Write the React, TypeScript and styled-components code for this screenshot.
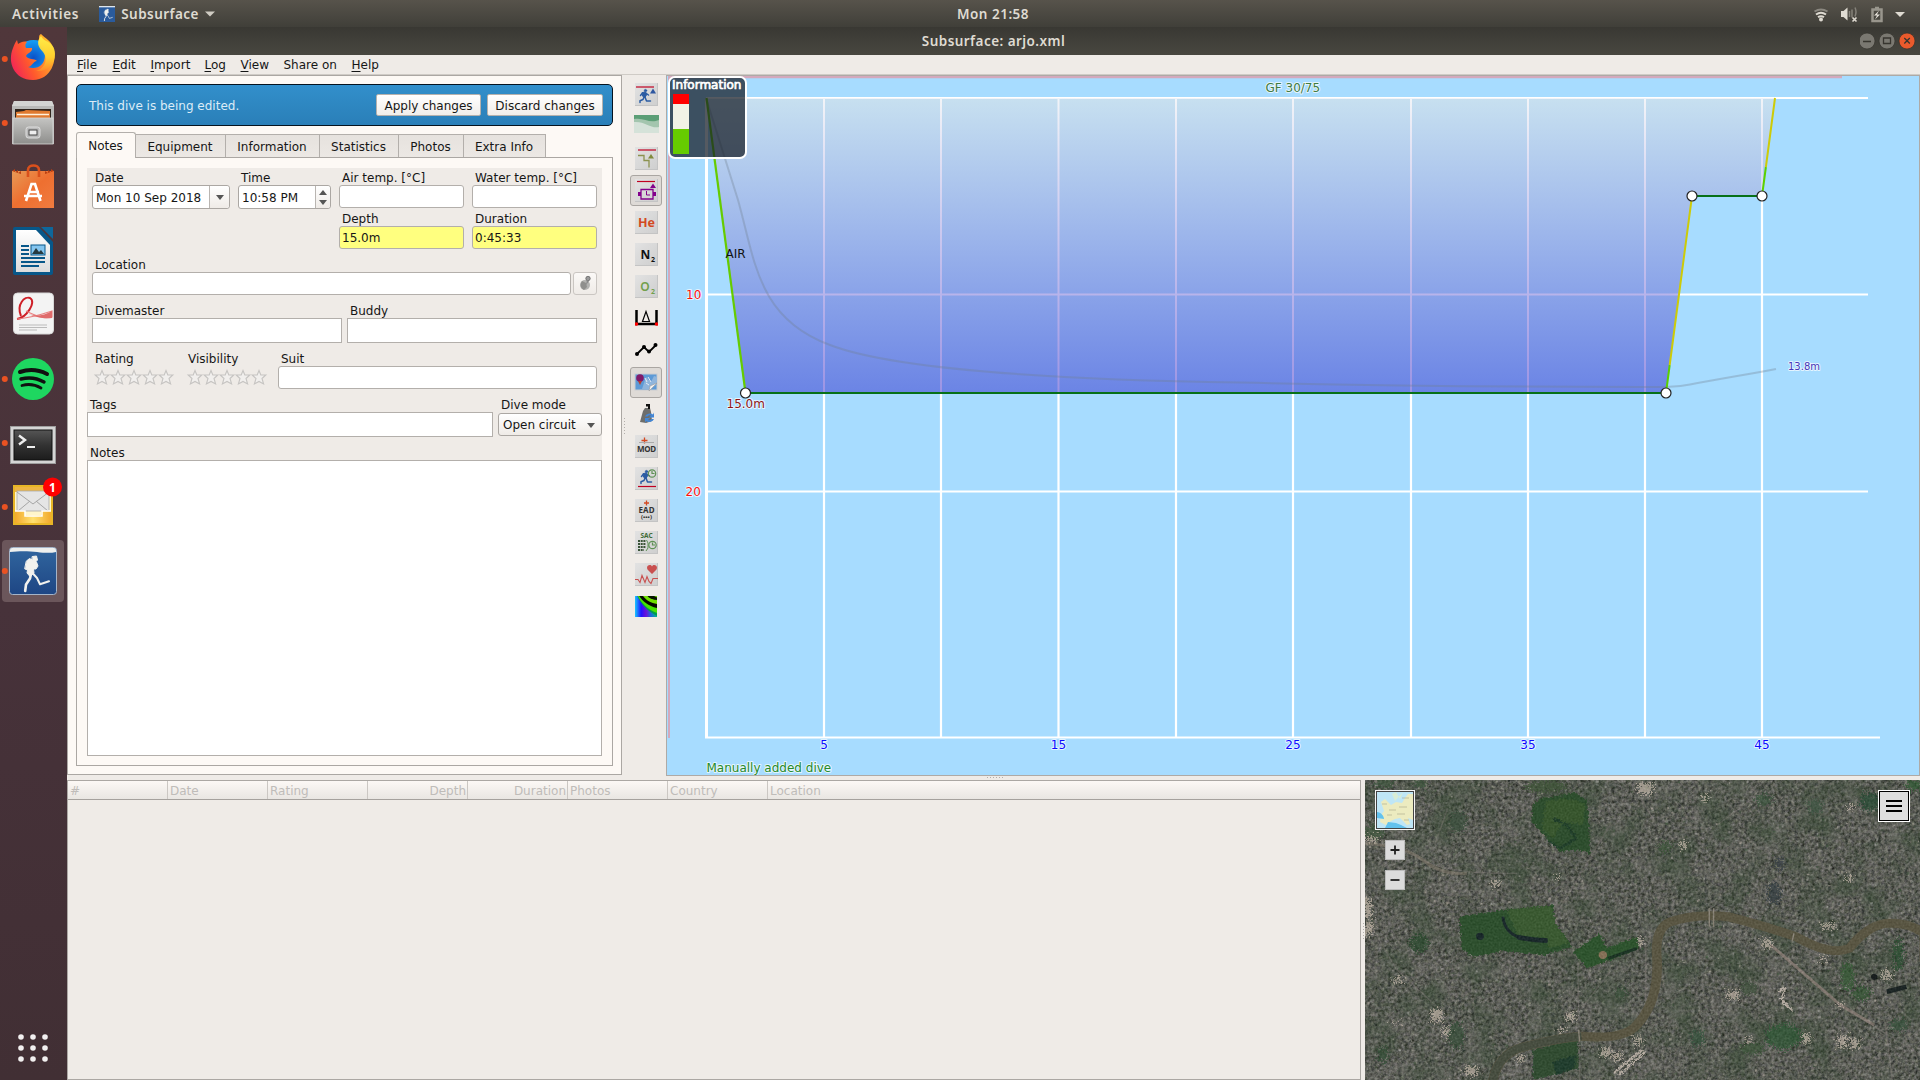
import React from "react";
import styled, { createGlobalStyle, css } from "styled-components";

const GlobalStyle = createGlobalStyle`
  * { box-sizing: border-box; }
  html, body { margin: 0; padding: 0; overflow: hidden; }
  svg { display: block; }
`;

const uiFont = `"DejaVu Sans", sans-serif`;
const shellFont = `"Noto Sans", "Open Sans", sans-serif`;

/* ---------- shell ---------- */

const Screen = styled.div`
  width: 1920px;
  height: 1080px;
  display: flex;
  flex-direction: column;
  background: #efebe7;
  font: 12px/17px ${uiFont};
  color: #161616;
`;

const TopBar = styled.header`
  height: 27px;
  flex: none;
  display: grid;
  grid-template-columns: 1fr auto 1fr;
  align-items: center;
  padding: 0 14px 0 12px;
  background: linear-gradient(#57534b, #403f39);
  color: #dfdbd2;
  font: 600 13.5px/28px ${shellFont};
`;

const TopLeft = styled.div`
  display: flex;
  align-items: center;
  letter-spacing: 0.7px;
`;

const AppMenu = styled.div`
  display: flex;
  align-items: center;
  margin-left: 20px;
  gap: 6px;
`;

const AppName = styled.span`
  letter-spacing: 0.45px;
`;

const Clock = styled.div`
  letter-spacing: 0.5px;
  padding-left: 68px;
  width: 141px;
  white-space: nowrap;
  display: flex;
  justify-content: center;
`;

const Tray = styled.div`
  display: flex;
  justify-content: flex-end;
`;

const Body = styled.div`
  flex: 1;
  min-height: 0;
  display: flex;
`;

const Dock = styled.nav`
  width: 67px;
  flex: none;
  display: flex;
  flex-direction: column;
  justify-content: space-between;
  background: linear-gradient(#50373b, #47323a 55%, #412f34);
`;

const DockItem = styled.div`
  height: 64px;
`;

const Window = styled.main`
  flex: 1;
  min-width: 0;
  display: flex;
  flex-direction: column;
`;

const TitleBar = styled.div`
  height: 28px;
  flex: none;
  display: grid;
  grid-template-columns: 60px 1fr 60px;
  align-items: center;
  background: linear-gradient(#393833, #484740);
  color: #dfdbd2;
  font: 600 13.5px/28px ${shellFont};
  letter-spacing: 0.45px;
`;

const WindowTitle = styled.div`
  text-align: center;
`;

const MenuBar = styled.div`
  height: 20px;
  flex: none;
  display: flex;
  gap: 14.5px;
  padding: 2px 0 0 10px;
  border-bottom: 1px solid #cfcbc6;
`;

const MenuEntry = styled.span<{ $w: number }>`
  width: ${(p) => p.$w}px;
  white-space: nowrap;
  u { text-underline-offset: 2px; }
`;

const UpperPane = styled.div`
  height: 701px;
  flex: none;
  display: flex;
  position: relative;
`;

const LowerPane = styled.div`
  flex: 1;
  display: flex;
  padding-top: 4px;
`;

/* ---------- dive editor ---------- */

const EditorFrame = styled.section`
  width: 555px;
  height: 700px;
  flex: none;
  border: 1px solid #aba7a3;
  background: #fdf9f5;
  padding: 8px;
`;

const MessageBar = styled.div`
  height: 42px;
  display: flex;
  align-items: center;
  gap: 6px;
  padding: 0 9px 0 12px;
  border: 1px solid #05131f;
  border-radius: 5px;
  background: linear-gradient(#328fcb, #2a7fb8);
  color: #dcecf7;
`;

const MessageText = styled.span`
  flex: 1;
  padding-top: 2px;
`;

const PushButton = styled.button<{ $w: number }>`
  width: ${(p) => p.$w}px;
  height: 22px;
  padding: 2px 0 0;
  border: 1px solid #b5b1ad;
  border-radius: 2px;
  background: linear-gradient(#ffffff, #f1eeea);
  color: #161616;
  font: 12px/18px ${uiFont};
  white-space: nowrap;
`;

const Tabs = styled.div`
  display: flex;
  align-items: flex-end;
  height: 31px;
  padding-top: 5px;
`;

const Tab = styled.div<{ $w: number; $active?: boolean }>`
  width: ${(p) => p.$w}px;
  height: 23px;
  line-height: 24px;
  text-align: center;
  border: 1px solid #b3afab;
  border-left-width: 0;
  border-bottom: 0;
  padding-right: 1px;
  background: linear-gradient(#e6e2de, #ece8e4);
  ${(p) =>
    p.$active &&
    css`
      height: 26px;
      line-height: 27px;
      margin-bottom: -1px;
      border-left-width: 1px;
      border-radius: 3px 3px 0 0;
      background: #fdf9f5;
      position: relative;
    `}
`;

const TabPane = styled.div`
  height: 609px;
  padding: 10px;
  border: 1px solid #aba7a3;
`;

const Form = styled.div`
  height: 588px;
  background: #efebe7;
`;

const Row = styled.div<{ $top?: number; $gap?: number; $indent?: number }>`
  display: flex;
  gap: ${(p) => p.$gap ?? 8}px;
  padding-top: ${(p) => p.$top ?? 0}px;
  padding-left: ${(p) => p.$indent ?? 5}px;
`;

const Field = styled.label<{ $w: number; $lh?: number }>`
  width: ${(p) => p.$w}px;
  display: flex;
  flex-direction: column;
  > span {
    height: ${(p) => p.$lh ?? 16}px;
    line-height: ${(p) => (p.$lh ? p.$lh + 4 : 18)}px;
    padding-left: 3px;
    white-space: nowrap;
  }
`;

const Box = styled.div<{ $h?: number; $yellow?: boolean; $square?: boolean }>`
  height: ${(p) => p.$h ?? 23}px;
  line-height: 22px;
  padding-left: 2px;
  border: 1px solid #b3afab;
  border-radius: ${(p) => (p.$square ? 0 : 3)}px;
  background: ${(p) => (p.$yellow ? "#ffff7f" : "#ffffff")};
`;

const DateBox = styled.div`
  height: 24px;
  display: flex;
  border: 1px solid #aba7a3;
  border-radius: 3px;
  background: #fff;
  line-height: 24px;
`;

const DateValue = styled.div`
  flex: 1;
  padding-left: 3px;
  white-space: nowrap;
`;

const DropZone = styled.div<{ $w: number }>`
  width: ${(p) => p.$w}px;
  display: flex;
  flex-direction: column;
  align-items: center;
  justify-content: center;
  gap: 5px;
  border-left: 1px solid #b9b5b1;
  border-radius: 0 3px 3px 0;
  background: linear-gradient(#fff, #efebe7);
`;

const Arrow = styled.i<{ $up?: boolean }>`
  border: 4px solid transparent;
  border-top: ${(p) => (p.$up ? 0 : "5px solid #555")};
  border-bottom: ${(p) => (p.$up ? "5px solid #555" : 0)};
`;

const SelectBox = styled.div`
  height: 23px;
  margin-top: 1px;
  display: flex;
  align-items: center;
  justify-content: space-between;
  padding: 1px 6px 0 4px;
  border: 1px solid #aba7a3;
  border-radius: 3px;
  background: linear-gradient(#fff, #efebe7);
  white-space: nowrap;
`;

const GlobeButton = styled.div`
  width: 24px;
  height: 23px;
  margin: 16px 0 0 -6px;
  border: 1px solid #cac6c2;
  border-radius: 3px;
  background: linear-gradient(#fbf9f7, #efebe7);
`;

/* ---------- profile ---------- */

const ToolStrip = styled.aside`
  width: 44px;
  flex: none;
  display: flex;
  flex-direction: column;
  padding: 4px 0 0 4px;
`;

const Tool = styled.div<{ $on?: boolean }>`
  width: 32px;
  height: 31px;
  margin: 0 0 1px 4px;
  display: flex;
  align-items: center;
  justify-content: center;
  border: 1px solid ${(p) => (p.$on ? "#aaa6a2" : "transparent")};
  border-radius: 3px;
  background: ${(p) => (p.$on ? "#dedad6" : "transparent")};
`;

const ProfileFrame = styled.section`
  flex: 1;
  height: 701px;
  border: 1px solid #aeaaa6;
  background: #a7dcff;
  position: relative;
`;

const InfoBox = styled.div`
  position: absolute;
  left: 1px;
  top: 0;
  width: 79px;
  height: 83px;
  overflow: hidden;
  border: 2px solid #fff;
  border-radius: 7px;
  background: rgba(20, 26, 36, 0.72);
  color: #fff;
  font: 12px/15px ${uiFont};
  -webkit-text-stroke: 0.7px #fff;
  padding-left: 2px;
  white-space: nowrap;
`;

const Gauge = styled.div`
  width: 16px;
  height: 60px;
  margin: 1px 0 0 1px;
  background: linear-gradient(#ff0000 0 10px, #f2f2e6 10px 35px, #66cc00 35px);
`;

const Grip = styled.div<{ $x: number; $y: number; $vertical?: boolean }>`
  position: absolute;
  left: ${(p) => p.$x}px;
  top: ${(p) => p.$y}px;
  width: ${(p) => (p.$vertical ? 1 : 17)}px;
  height: ${(p) => (p.$vertical ? 17 : 1)}px;
  background: repeating-linear-gradient(
    ${(p) => (p.$vertical ? "180deg" : "90deg")},
    #b3afab 0 1px,
    transparent 1px 3px
  );
`;

/* ---------- list and map ---------- */

const DiveList = styled.section`
  width: 1294px;
  border: 1px solid #aba7a3;
  margin-right: 4px;
`;

const ListHeader = styled.div`
  display: flex;
  height: 19px;
  border-bottom: 1px solid #a5a19d;
  background: linear-gradient(#fcf8f5, #e9e6e2);
  color: #bfbcb9;
  line-height: 20px;
`;

const HeaderCell = styled.div<{ $right?: boolean; $last?: boolean }>`
  width: 100px;
  padding: 0 1px 0 2px;
  text-align: ${(p) => (p.$right ? "right" : "left")};
  border-right: ${(p) => (p.$last ? 0 : "1px solid #cbc7c3")};
`;

const MapFrame = styled.section`
  flex: 1;
  height: 300px;
  position: relative;
  overflow: hidden;
`;

const MapControl = styled.div<{ $x: number; $y: number; $w: number; $h: number }>`
  position: absolute;
  left: ${(p) => p.$x}px;
  top: ${(p) => p.$y}px;
  width: ${(p) => p.$w}px;
  height: ${(p) => p.$h}px;
`;

/* ---------- icons ---------- */

const DiverShape = ({ color = "#f2f2ee" }: { color?: string }) => (
  <g fill={color} stroke={color} strokeLinecap="round" strokeLinejoin="round">
    <path d="M23.500 9.500l4-.5 1 4-2.500 2.500h-3z" strokeWidth="1" />
    <path d="M17.500 14l3-2.500 3 1.500 4 2 1.500 4-2 3-2.500 0 .5 4-4 3.500-3-3.500.5-3-2.500-1z" strokeWidth="1" />
    <path d="M22 27l-1 4.500-4 6-.8 6.500" fill="none" strokeWidth="2.600" />
    <path d="M23.500 26l4.500 5 3 6.300 9-3" fill="none" strokeWidth="2" />
  </g>
);

const TinyDiver = ({ x, y }: { x: number; y: number }) => (
  <g transform={`translate(${x} ${y})`} fill="none" stroke="#2b5ca3" strokeLinecap="round" strokeLinejoin="round">
    <circle cx="6.500" cy="1.600" r="1.200" fill="#2b5ca3" strokeWidth=".8" />
    <path d="M3.500 3.500l3-.5 1.500 2-2 3.500-2-1z" fill="#2b5ca3" strokeWidth="1" />
    <path d="M3.500 4L1.500 6.500M8 5l1.500 1M5 8L4 10.500l-3 1.200L1 13.500M6 8l1.500 4h4" strokeWidth="1.500" />
  </g>
);

const dockArt: { dot: boolean; art: React.ReactNode; active?: boolean }[] = [
  {
    dot: true,
    art: (
      <g>
        <circle cx="33.500" cy="31" r="18" fill="url(#ffBlue)" />
        <path d="M13 21c1-3 2-5 4-8l1 4c3-2 6-3 9-2-2 2-2 4-1 6h6c1 4-5 5-6 8 2 4 8 2 11 5-4 0-5 6-9 6 8 3 17-1 17-12 0-7-8-10-6-16 0-3 0-4 2-5 4 4 10 7 12 13 5 13-2 33-20 33C14 53 7 35 13 21z" fill="url(#ffFire)" />
        <path d="M41 9c-5 6-3 11 2 16 6 8 1 17-7 19 12 1 19-7 19-17 0-7-4-11-9-13-3-2-4-3-5-5z" fill="url(#ffGold)" opacity=".95" />
      </g>
    ),
  },
  {
    dot: true,
    art: (
      <g>
        <path d="M14 10h38l2 5v38H12V15z" fill="#b9b9b7" />
        <path d="M12 15l2-5h38l2 5z" fill="#d4d4d2" />
        <rect x="15" y="18" width="36" height="12" fill="#30251d" />
        <path d="M16 21l8-1 2-1 24 1v8H16z" fill="#e07a30" />
        <path d="M17 23.500h32" stroke="#fff1dc" strokeWidth="1.500" />
        <rect x="13" y="27" width="40" height="26" fill="url(#metal)" stroke="#d8d8d6" strokeWidth=".8" />
        <rect x="26" y="36" width="14" height="11" rx="2.500" fill="#bababa" stroke="#dedede" />
        <rect x="29" y="39" width="8" height="5" fill="#eee" stroke="#444" strokeWidth="1" />
      </g>
    ),
  },
  {
    dot: false,
    art: (
      <g>
        <path d="M12 16h42v37H12z" fill="url(#bag)" />
        <path d="M12 16l3-2v3l3-2v3l3-2v3M54 16l-3-2v3l-3-2v3l-3-2v3" fill="#ba3f12" />
        <path d="M28 22V15c0-6 11-6 11 0v7" fill="none" stroke="#d9501c" strokeWidth="2.600" />
        <path d="M26 46l5.500-17h3.500L40.500 46M24 41h18M29 37h10" stroke="#fff" strokeWidth="2.600" fill="none" />
      </g>
    ),
  },
  {
    dot: false,
    art: (
      <g>
        <path d="M15 8h24l14 15v31a2 2 0 0 1-2 2H15a2 2 0 0 1-2-2V10a2 2 0 0 1 2-2z" fill="#075789" />
        <path d="M16 11h20l14 15v27H16z" fill="url(#paper)" />
        <path d="M41 8h12v12z" fill="#0e679b" />
        <path d="M21 27h8M21 31h8M21 35h8M21 39h24M21 43h24M21 47h18" stroke="#075789" strokeWidth="1.800" />
        <rect x="31" y="26" width="14" height="10" fill="#84c5ef" stroke="#075789" />
        <path d="M32 35l4-6 3 4 2-2 3 4z" fill="#263a40" />
      </g>
    ),
  },
  {
    dot: false,
    art: (
      <g>
        <rect x="13.500" y="10" width="40" height="41" rx="4" fill="#f3f3f3" stroke="#d7d7d7" />
        <path d="M21 33c-5-12 4-20 9-18 7 4-4 20-13 21" fill="none" stroke="#ce1f27" strokeWidth="2" />
        <path d="M17 36c12-1 20-3 35-8v6c-9 2-16-1-26-6" fill="none" stroke="#e88080" strokeWidth="1.200" />
        <path d="M24 28c8 6 17 6 28 0v7c-9 1-20-1-28-7z" fill="#e06a6a" />
        <path d="M19 42h28M19 44.500h28M19 47h18" stroke="#bbb" strokeWidth="1" />
      </g>
    ),
  },
  {
    dot: true,
    art: (
      <g>
        <circle cx="33" cy="32" r="21" fill="#1ed760" />
        <g fill="none" stroke="#101010" strokeLinecap="round">
          <path d="M20 25c9-3 19-2 27 2" strokeWidth="4" />
          <path d="M21 32c8-2 16-1 23 3" strokeWidth="3.400" />
          <path d="M22 38.500c7-2 13-1 19 2.500" strokeWidth="2.800" />
        </g>
      </g>
    ),
  },
  {
    dot: true,
    art: (
      <g>
        <rect x="10.500" y="15.500" width="45" height="37" fill="#d5d5d5" stroke="#9e9e9e" />
        <rect x="14" y="19" width="38" height="30" fill="url(#term)" stroke="#111" />
        <path d="M19 24.500l6 4.500-6 4.500" fill="none" stroke="#eee" strokeWidth="2.400" />
        <path d="M27 36h8" stroke="#eee" strokeWidth="2" />
      </g>
    ),
  },
  {
    dot: true,
    art: (
      <g>
        <rect x="14" y="11" width="38" height="38" fill="#fff6cb" stroke="#e7b526" strokeWidth="2" />
        <path d="M15 12h36v5H15z" fill="#edb544" />
        <rect x="17" y="16" width="32" height="20" fill="#e5e5e5" stroke="#aaa" strokeWidth=".8" />
        <path d="M17 17l16 12L49 17M18 36l12-10M48 36L36 26" fill="none" stroke="#a5a5a5" />
        <path d="M15 36h10v4h16v-4h10v12H15z" fill="url(#mail)" />
        <path d="M15 36h10v5h17v-5h9" fill="none" stroke="#fff" strokeWidth="1.500" />
        <circle cx="52.500" cy="12" r="9.500" fill="#f00" />
        <text x="52.500" y="16.500" textAnchor="middle" fill="#fff" fontFamily="Noto Sans" fontWeight="700" fontSize="12">1</text>
      </g>
    ),
  },
  {
    dot: true,
    active: true,
    art: (
      <g transform="translate(9 8)">
        <rect x=".5" y=".5" width="47" height="47" rx="3" fill="url(#sea)" stroke="#a5b4c8" />
        <path d="M1 4V3a2 2 0 0 1 2-2h42a2 2 0 0 1 2 2v2c-12 3-23-3-46 0z" fill="#eef0ee" />
        <DiverShape />
      </g>
    ),
  },
];

const SharedDefs = () => (
  <defs>
    <radialGradient id="ffBlue"><stop offset="0" stopColor="#0b50c8" /><stop offset="1" stopColor="#14a0f5" /></radialGradient>
    <linearGradient id="ffFire" x1="0" y1=".8" x2="1" y2=".3"><stop offset="0" stopColor="#f01f5c" /><stop offset=".4" stopColor="#ff5a2c" /><stop offset="1" stopColor="#ffc52a" /></linearGradient>
    <linearGradient id="ffGold" x2="0" y2="1"><stop offset="0" stopColor="#fff04a" /><stop offset=".6" stopColor="#ffd02e" /><stop offset="1" stopColor="#ff8a28" /></linearGradient>
    <linearGradient id="metal" x2="0" y2="1"><stop offset="0" stopColor="#c4c4c2" /><stop offset="1" stopColor="#8e8e8c" /></linearGradient>
    <linearGradient id="bag" x2="1" y2="1"><stop offset="0" stopColor="#e79a56" /><stop offset=".5" stopColor="#ee6f30" /><stop offset="1" stopColor="#f07c40" /></linearGradient>
    <linearGradient id="paper" x2="0" y2="1"><stop offset="0" stopColor="#fff" /><stop offset="1" stopColor="#dcdcdc" /></linearGradient>
    <linearGradient id="term" x2="0" y2="1"><stop offset="0" stopColor="#555" /><stop offset=".5" stopColor="#333" /><stop offset="1" stopColor="#1c1c1c" /></linearGradient>
    <linearGradient id="mail" x2="1" y2="0"><stop offset="0" stopColor="#f2a92c" /><stop offset=".5" stopColor="#ffe171" /><stop offset="1" stopColor="#f2a92c" /></linearGradient>
    <linearGradient id="sea" x2="0" y2="1"><stop offset="0" stopColor="#31669f" /><stop offset="1" stopColor="#1e4684" /></linearGradient>
    <linearGradient id="tile" x2="1" y2="1"><stop offset="0" stopColor="#e2e2e2" /><stop offset="1" stopColor="#cfcfcf" /></linearGradient>
  </defs>
);

const Tile = ({ children }: { children: React.ReactNode }) => (
  <svg width="23" height="23" viewBox="0 0 23 23">
    <rect width="23" height="23" fill="#c4c4c4" />
    <rect width="22" height="22" fill="url(#tile)" />
    {children}
  </svg>
);

const MiniClock = ({ x, y }: { x: number; y: number }) => (
  <g fill="none" stroke="#5f9155" strokeWidth="1.200">
    <circle cx={x} cy={y} r="3.700" />
    <path d={`M${x} ${y - 2.5}v2.500h2.500`} />
  </g>
);

const label = { fontFamily: "Noto Sans", fontWeight: 700, textAnchor: "middle" as const };

const tools: { on?: boolean; art: React.ReactNode }[] = [
  { art: <Tile><path d="M1 4h18" stroke="#c00020" strokeWidth="1.200" /><path d="M15 10.500l3-5 3 5z" fill="#2e57a0" /><TinyDiver x={4} y={6} /></Tile> },
  { art: <svg width="25" height="24" viewBox="0 0 25 24"><rect width="25" height="18" fill="#d5e2d9" /><path d="M0 0h25v12C17 14 11 6 0 7z" fill="#a3c5ae" /><path d="M0 0h25v5C15 9 10 2 0 4z" fill="#5c9e76" /></svg> },
  { art: <Tile><path d="M3 3h18" stroke="#c00020" strokeWidth="1.200" /><path d="M3 8.500h6v5h5v7" fill="none" stroke="#8c9250" strokeWidth="1.300" /><path d="M13 11.500l3-4.500 3 4.500z" fill="#808a3c" /></Tile> },
  { on: true, art: <Tile><path d="M2 2.500h18" stroke="#c00020" strokeWidth="1.200" /><path d="M15 9l3-4.500L21 9z" fill="#83008b" /><path d="M6 10.500h12v9.500H6z" fill="none" stroke="#83008b" strokeWidth="1.300" /><path d="M11.500 12v4h3.500" fill="none" stroke="#83008b" /><path d="M3 13h3v4H3zM18 13h3v4h-3z" fill="#83008b" /></Tile> },
  { art: <Tile><text {...label} x="11.500" y="16" fontSize="12.500" fill="#d34a23">He</text></Tile> },
  { art: <Tile><text {...label} x="10.500" y="16" fontSize="12" fill="#111">N</text><text {...label} x="18" y="18.500" fontSize="7" fill="#111">2</text></Tile> },
  { art: <Tile><text {...label} x="10" y="16" fontSize="12" fill="#72a04c" fontWeight={600}>O</text><text {...label} x="18" y="18.500" fontSize="7" fill="#72a04c">2</text></Tile> },
  { art: <svg width="23" height="23" viewBox="0 0 23 23"><path d="M1.500 3v14h20V3" fill="none" stroke="#000" strokeWidth="2.500" /><path d="M7.500 14.500L11 4.500l3.500 10z" fill="none" stroke="#000" strokeWidth="1.200" /><circle cx="1.500" cy="17" r="1.800" fill="red" /><circle cx="21.500" cy="17" r="1.800" fill="red" /></svg> },
  { art: <svg width="23" height="23" viewBox="0 0 23 23"><path d="M2 15l7-7 5 5 7-7" fill="none" stroke="#000" strokeWidth="1.800" /><g><circle cx="2" cy="15" r="2" /><circle cx="9" cy="8" r="2" /><circle cx="14" cy="12.500" r="2" /><circle cx="20.500" cy="6" r="2" /></g></svg> },
  { on: true, art: <svg width="24" height="23" viewBox="0 0 24 23"><rect x="1" y="3" width="22" height="16" fill="#5d9ad6" stroke="#c9ccd0" /><path d="M8 18l4-12 5 5 3-6 3 1v7l-6 5z" fill="#8fb5dc" /><circle cx="6" cy="7" r="3.800" fill="#811b6a" /><path d="M4 10l2 4 2-4z" fill="#b53d31" /><path d="M11 7l2 4M14 6l3 5M12 12l3 2" stroke="#e6edf5" /><path d="M15 20l1-5 7-3z" fill="#f2f2f2" stroke="#999" strokeWidth=".6" /></svg> },
  { art: <svg width="23" height="23" viewBox="0 0 23 23"><path d="M5 19L8 8l2-3h5l1 4 1 9-6 2z" fill="#6d6e6c" /><path d="M11 1h4v5h-2V3.500h-2z" fill="#111" /><path d="M10 13.500a5 4 0 0 1 8-2l1-2v5h-5l2-2a3 3 0 0 0-3.500 1zM19 16a5 4 0 0 1-8 2l-1 2v-5h5l-2 2a3 3 0 0 0 3.500-1z" fill="#4386d5" /></svg> },
  { art: <Tile><path d="M9.500 2.500v6M6.500 5.500h6" stroke="#d34a23" strokeWidth="1.300" /><path d="M4 7.500h15" stroke="#aaa" /><text {...label} x="11.500" y="17" fontSize="8" fill="#333" textLength="19">MOD</text></Tile> },
  { art: <Tile><TinyDiver x={5} y={3} /><MiniClock x={17} y={6.5} /><path d="M3 19.500h18" stroke="#c00020" strokeWidth="1.200" /></Tile> },
  { art: <Tile><path d="M11.500 1.500v5M9 4h5" stroke="#d34a23" strokeWidth="1.300" /><text {...label} x="11.500" y="14" fontSize="8" fill="#333" textLength="16">EAD</text><text {...label} x="11.500" y="20" fontSize="6" fill="#333">(•••)</text></Tile> },
  { art: <Tile><text {...label} x="11.500" y="7" fontSize="6.500" fill="#3f6b37">SAC</text><path d="M3 10h8M3 13h8M3 16h8M3 19h6" stroke="#3b5437" strokeWidth="1.800" strokeDasharray="2 .7" /><path d="M11.500 9l1.500 3v5l-2 3" fill="none" stroke="#5f9155" /><MiniClock x={17.5} y={14} /></Tile> },
  { art: <Tile><path d="M17 11l-4.500-4.500c-2-4 3-6 4.500-3 1.500-3 6.500-1 4.500 3z" fill="#c9504f" /><path d="M0 16.500h3l2 3 2-7 3 7 2-6 2 5 2 2 2-5h5" fill="none" stroke="#c9504f" strokeWidth="1.100" /></Tile> },
  {
    art: (
      <svg width="23" height="23" viewBox="0 0 23 23">
        <defs>
          <linearGradient id="heat" x2="1"><stop offset="0" stopColor="#18c8ff" /><stop offset=".28" stopColor="#2010ff" /><stop offset=".5" stopColor="#6a10d8" /><stop offset=".72" stopColor="#1c68d8" /><stop offset="1" stopColor="#00b890" /></linearGradient>
          <clipPath id="heatClip"><rect y="1" width="22" height="21" /></clipPath>
        </defs>
        <g clipPath="url(#heatClip)">
          <rect width="22" height="22" fill="url(#heat)" />
          <path d="M2 0c3 8 9 15 20 21V0z" fill="#009a50" />
          <path d="M2.500 0c3 7 9 14 19.500 18V0z" fill="#48e400" />
          <path d="M3.500 0c4 6 9 11 18.500 13V0z" fill="#050a00" />
          <path d="M8 1c4 5 8 7 14 8V4C17 5 13 3 12 0z" fill="#6fe000" />
          <path d="M12 0c3 3 6 5 10 5V0z" fill="#081400" />
          <path d="M17 0l5 2.500V0z" fill="#68d800" />
        </g>
      </svg>
    ),
  },
];

const starPath = "M8 1l1.800 4.500h5l-3.800 3.500 1.600 5.500L8 12l-4.600 2.500L5 9 1.200 5.500h5z";
const Stars = () => (
  <svg width="82" height="17" viewBox="0 0 82 17">
    {[0, 1, 2, 3, 4].map((i) => (
      <path key={i} transform={`translate(${1 + i * 16} .5)`} d={starPath} fill="#f1efed" stroke="#c6c4c2" strokeWidth="1.100" />
    ))}
  </svg>
);

/* ---------- dive profile drawing ---------- */

const gridX = [706.5, 824, 941, 1058.5, 1176, 1293, 1411, 1528, 1645, 1762];
const outline = "706,98 745,393 1666,393 1692,196 1762,196 1775,98";
const handles = [[745.5, 393], [1666, 393], [1692, 196], [1762, 196]];

const ProfileText = styled.text<{ $small?: boolean }>`
  font: ${(p) => (p.$small ? 10 : 12)}px ${uiFont};
  paint-order: stroke;
  stroke: rgba(255, 255, 255, 0.7);
  stroke-width: 2px;
  stroke-linejoin: round;
`;

const Profile = () => (
  <svg width="1251" height="699" viewBox="667 76 1251 699">
    <defs>
      <linearGradient id="water" gradientUnits="userSpaceOnUse" x1="0" y1="98" x2="0" y2="393">
        <stop offset="0" stopColor="#c7e0f0" />
        <stop offset="1" stopColor="#6b84e5" />
      </linearGradient>
      <linearGradient id="inner" gradientUnits="userSpaceOnUse" x1="0" y1="98" x2="0" y2="393">
        <stop offset="0" stopColor="#f2f4f8" />
        <stop offset="1" stopColor="#9c94e4" />
      </linearGradient>
      <clipPath id="dive"><polygon points={outline} /></clipPath>
    </defs>
    <path d="M669 77V738" stroke="#d3a9bd" strokeWidth="2" />
    <path d="M668 77H1842" stroke="#d3a9bd" strokeWidth="2.500" />
    <g stroke="#fff" strokeWidth="2.200">
      {gridX.map((x, i) => <line key={x} x1={x} x2={x} y1="98" y2="738" strokeWidth={i ? 2.2 : 3} />)}
      <path d="M706 98H1868M706 294.500H1868M706 491.500H1868M705 737.500H1880" fill="none" />
    </g>
    <polygon points={outline} fill="url(#water)" />
    <g clipPath="url(#dive)" stroke="url(#inner)" strokeWidth="2">
      {gridX.slice(1).map((x) => <path key={x} d={`M${x} 98L${x + 0.01} 393`} />)}
      <path d="M706 98L1868 98.010M706 294.500L1868 294.510" />
    </g>
    <path d="M706 98L738 200C755 260 757 318 830 345 C900 372 1080 380 1240 382.500C1400 386 1560 387 1640 387C1665 387 1677 387 1690 384.500C1725 378 1750 374 1776 369" fill="none" stroke="#70808f" strokeOpacity=".33" strokeWidth="2" />
    <path d="M706.500 98L745.500 393" stroke="#66cc00" strokeWidth="2.200" />
    <path d="M745 393H1666M1692 196H1762" stroke="#077018" strokeWidth="2.200" />
    <path d="M1666 393L1669.700 365M1762 196L1765.900 167" stroke="#5cd000" strokeWidth="2" />
    <path d="M1669.700 365L1692 196M1765.900 167L1775 98" stroke="#cdcb08" strokeWidth="2" />
    {handles.map(([x, y]) => <circle key={x} cx={x} cy={y} r="5" fill="#fff" stroke="#222" strokeWidth="1.200" />)}
    <text x="725.500" y="258" fontFamily="DejaVu Sans" fontSize="12" fill="#111">AIR</text>
    <ProfileText x="726.500" y="408" fill="#8f1414">15.0m</ProfileText>
    <ProfileText x="686" y="299" fill="#ff1010">10</ProfileText>
    <ProfileText x="685.500" y="495.500" fill="#ff1010">20</ProfileText>
    {[5, 15, 25, 35, 45].map((n, i) => (
      <ProfileText key={n} x={gridX[1 + i * 2]} y="749" textAnchor="middle" fill="#0a0aff">{n}</ProfileText>
    ))}
    <ProfileText x="1265.500" y="92" fill="#3f7a42">GF 30/75</ProfileText>
    <ProfileText x="706.500" y="772" fill="#268a2a">Manually added dive</ProfileText>
    <ProfileText $small x="1788" y="369.500" fill="#4636b8">13.8m</ProfileText>
  </svg>
);

/* ---------- satellite map ---------- */

const speckles = (() => {
  let s = 7;
  const rnd = () => ((s = (s * 16807) % 2147483647) / 2147483647);
  const tones = ["#c8beb2", "#aaa6a0", "#2d3a2c", "#31502f", "#8f8880", "#24302e", "#b2b2ae"];
  return Array.from({ length: 1500 }, () => ({
    x: rnd() * 555,
    y: rnd() * 300,
    w: 0.8 + rnd() * 2,
    h: 0.8 + rnd() * 1.8,
    c: tones[Math.floor(rnd() * tones.length)],
    o: 0.2 + rnd() * 0.4,
  }));
})();

const patches: [number, number, number, number, string][] = [
  [165, 505, 26, 28, "#274a2c"], [35, 172, 32, 22, "#3a5539"], [1430, 80, 30, 26, "#224b31"], [1550, 30, 22, 18, "#2c5a2e"],
  [275, 140, 26, 30, "#38503a"], [270, 780, 22, 40, "#314e35"], [1185, 785, 50, 38, "#2c5833"], [1365, 605, 18, 45, "#315c31"],
  [1405, 655, 26, 22, "#2f552e"], [1508, 540, 14, 50, "#28502d"], [945, 790, 20, 24, "#31523a"], [1130, 75, 24, 18, "#39553a"],
  [65, 840, 14, 25, "#2f4d33"], [1090, 640, 24, 20, "#3b5039"], [855, 215, 18, 18, "#385334"], [730, 655, 16, 16, "#385139"],
  [1160, 355, 18, 34, "#333c43"], [1175, 265, 12, 20, "#353e45"], [1510, 750, 25, 18, "#36523a"], [1275, 95, 20, 22, "#3a5540"],
  [70, 25, 30, 14, "#3a563a"], [170, 25, 20, 12, "#3b573b"], [520, 35, 60, 16, "#3d5434"], [1100, 820, 35, 16, "#3a5638"],
];

const buildings: [number, number, number, number][] = [
  [215, 722, 32, 34], [240, 770, 22, 20], [563, 765, 16, 14], [800, 40, 40, 34], [590, 725, 22, 24], [783, 500, 14, 24],
  [690, 832, 30, 24], [720, 845, 24, 20], [1140, 505, 26, 24], [1312, 452, 44, 12], [1295, 552, 18, 12], [1250, 790, 18, 32], [1350, 800, 22, 36], [1385, 805, 22, 30],
  [1475, 600, 24, 26], [1045, 660, 32, 20], [20, 400, 22, 60], [22, 460, 26, 36], [1375, 97, 12, 14], [1370, 310, 14, 16],
  [30, 192, 40, 14], [312, 888, 34, 26], [450, 850, 18, 20], [1345, 690, 12, 12], [105, 745, 28, 6], [780, 797, 24, 20],
  [1090, 798, 18, 10], [380, 325, 22, 16], [105, 615, 30, 10], [965, 70, 16, 16], [905, 210, 14, 24], [555, 305, 12, 10],
];

const SatelliteMap = () => (
  <svg width="555" height="300" viewBox="0 0 555 300">
    <defs>
      <filter id="city" x="0" y="0" width="100%" height="100%" colorInterpolationFilters="sRGB">
        <feTurbulence type="fractalNoise" baseFrequency=".3" numOctaves="4" seed="4" />
        <feColorMatrix values=".58 .06 0 0 .025  .54 .1 0 0 .035  .54 .04 .060 0 .005  0 0 0 0 1" />
      </filter>
      <filter id="blocks" x="0" y="0" width="100%" height="100%" colorInterpolationFilters="sRGB">
        <feTurbulence type="fractalNoise" baseFrequency=".03" numOctaves="5" seed="12" />
        <feColorMatrix values="0 0 0 0 .2  0 0 0 0 .29  0 0 0 0 .19  3 0 0 0 -1.300" />
      </filter>
      <filter id="haze" x="0" y="0" width="100%" height="100%" colorInterpolationFilters="sRGB">
        <feTurbulence type="fractalNoise" baseFrequency=".05" numOctaves="5" seed="31" />
        <feColorMatrix values="0 0 0 0 .54  0 0 0 0 .52  0 0 0 0 .51  0 3 0 0 -1.400" />
      </filter>
      <filter id="grain" x="0" y="0" width="100%" height="100%" colorInterpolationFilters="sRGB">
        <feTurbulence type="fractalNoise" baseFrequency=".5" numOctaves="2" seed="9" />
        <feColorMatrix values="1.400 0 0 0 -.35  1.400 0 0 0 -.35  1.400 0 0 0 -.35  0 0 0 0 .1" />
      </filter>
      <filter id="rough" x="-5%" y="-5%" width="110%" height="110%">
        <feTurbulence type="fractalNoise" baseFrequency=".16" numOctaves="3" seed="2" result="n" />
        <feDisplacementMap in="SourceGraphic" in2="n" scale="16" xChannelSelector="R" yChannelSelector="G" />
      </filter>
      <filter id="scatter" x="-5%" y="-5%" width="110%" height="110%">
        <feTurbulence type="fractalNoise" baseFrequency=".2" numOctaves="3" seed="6" result="n" />
        <feDisplacementMap in="SourceGraphic" in2="n" scale="50" xChannelSelector="R" yChannelSelector="G" />
      </filter>
    </defs>
    <rect width="555" height="300" fill="#57564f" />
    <rect width="555" height="300" filter="url(#city)" />
    <rect width="555" height="300" filter="url(#blocks)" opacity=".5" />
    <rect width="555" height="300" filter="url(#haze)" opacity=".3" />
    {speckles.map((p, i) => <rect key={i} x={p.x} y={p.y} width={p.w} height={p.h} fill={p.c} opacity={p.o} />)}
    <g transform="scale(.35714 .33333) translate(-14 -15)">
      <g fill="none" stroke="#8c8480" strokeWidth="4" opacity=".35">
        <path d="M1120 480L1345 690L1568 840M30 450L100 580L200 680M150 240Q230 300 440 295M245 100L210 210M700 150L560 400M610 560L615 915M1470 740L1490 915M780 60L820 130M1100 70L1000 150M620 700L700 590M800 500V680" />
      </g>
      <path d="M1150 510L1345 690L1440 750" stroke="#9c8a82" strokeWidth="9" fill="none" opacity=".6" />
      <path d="M15 205Q130 215 180 258T300 295" stroke="#847c6c" strokeWidth="9" fill="none" opacity=".6" />
      <g filter="url(#scatter)" opacity=".7">
        {patches.map(([x, y, w, h, c], i) => <ellipse key={i} cx={x} cy={y} rx={w} ry={h} fill={c} />)}
      </g>
      <g filter="url(#scatter)" fill="#d2c4b4" opacity=".65">
        {buildings.map(([x, y, w, h], i) => <rect key={i} x={x - w / 2} y={y - h / 2} width={w} height={h} />)}
      </g>
      <g filter="url(#rough)">
        <path d="M483 90L510 68L560 62L600 50L635 75L640 120L645 240L625 225L560 230L535 205L480 140Z" fill="#2c4d2a" />
        <path d="M520 80Q590 60 630 90L625 150L570 140L540 190L510 160Z" fill="#34562b" />
        <path d="M540 130L580 150L605 190L560 220L530 200" fill="none" stroke="#1e3d28" strokeWidth="8" />
        <path d="M278 425L400 405L540 390L545 440L595 515L520 540L400 528L320 545L285 525Z" fill="#294f29" />
        <path d="M410 405L535 392L550 450L585 505L530 520L520 490L440 480Z" fill="#375a2e" />
        <path d="M598 530L670 475L690 520L775 485L778 520L700 555L635 580Z" fill="#2c5229" />
        <path d="M485 825L610 790L612 880L500 912H485Z" fill="#2d4b2f" />
        <path d="M540 860L605 840L600 880L550 900Z" fill="#1f3b2a" />
      </g>
      <path d="M400 425Q405 470 440 485Q480 495 525 497" fill="none" stroke="#152527" strokeWidth="8" />
      <path d="M440 486Q480 495 525 497" fill="none" stroke="#152527" strokeWidth="14" />
      <circle cx="336" cy="484" r="11" fill="#152527" />
      <path d="M695 550L775 520" stroke="#16301f" strokeWidth="9" />
      <circle cx="680" cy="540" r="12" fill="#8a7357" />
      <path d="M372 918Q385 840 450 818Q550 790 620 784Q740 795 775 750Q835 680 832 560Q822 460 870 440Q940 415 1030 425Q1140 455 1220 485Q1320 545 1370 520Q1430 440 1490 445Q1540 445 1580 475V560" fill="none" stroke="#5a5641" strokeWidth="27" />
      <path d="M372 918Q385 840 450 818Q550 790 620 784" fill="none" stroke="#464d3e" strokeWidth="24" />
      <path d="M978 400V455M990 400V455M1215 475L1210 500M612 765L615 800" stroke="#8d877a" strokeWidth="4" />
      <path d="M1475 650L1530 635" stroke="#151f1e" strokeWidth="14" />
      <circle cx="1440" cy="606" r="9" fill="#101616" />
      <g filter="url(#rough)" fill="none" stroke="#bdb3a8" strokeWidth="6">
        <path d="M1170 650L1190 640L1180 675L1210 705" />
        <path d="M710 895L790 825M725 900L800 830" />
      </g>
    </g>
    <rect width="555" height="300" filter="url(#grain)" />
  </svg>
);

const MapThumb = () => (
  <svg width="40" height="40" viewBox="0 0 40 40">
    <rect width="40" height="40" fill="#f5f5f5" />
    <rect x="1.500" y="1.500" width="37" height="37" fill="#bfe6f6" stroke="#444" />
    <path d="M6 12l4-3 3 3 3 3 5-3 6 1 3-5 3-4h5v26l-5-2 2 6-3 1-7-7-5 1-4 2-5 4-6-3 1-7 3-4z" fill="#ecebc0" />
    <path d="M20 11l-3-7 4-2 4 7 3-7" fill="#d9edd5" />
    <path d="M2 22c4 0 7 4 7 7l-7-1zM13 32l8 1 5 2 6 3H10z" fill="#62c2ee" />
    <path d="M7 14h5M14 20h7M24 17h8M12 25h5M22 24h8M27 8h7M29 30h5" stroke="#aaa688" strokeWidth=".6" />
  </svg>
);

const ZoomButton = ({ plus }: { plus?: boolean }) => (
  <svg width="20" height="20" viewBox="0 0 20 20">
    <rect x=".5" y=".5" width="19" height="19" fill="#dcdcdc" stroke="#bdbdbd" />
    <path d={plus ? "M5.500 10h9M10 5.500v9" : "M5.500 10h9"} stroke="#222" strokeWidth="1.800" />
  </svg>
);

/* ---------- application ---------- */

const menus: [string, string, number][] = [
  ["F", "ile", 21], ["E", "dit", 23.5], ["I", "mport", 39.5], ["L", "og", 21.5], ["V", "iew", 28.5], ["", "Share on", 53.5], ["H", "elp", 30],
];
const tabs: [string, number][] = [["Equipment", 90], ["Information", 94], ["Statistics", 79], ["Photos", 65], ["Extra Info", 82]];
const columns: [string, boolean][] = [
  ["#", false], ["Date", false], ["Rating", false], ["Depth", true], ["Duration", true], ["Photos", false], ["Country", false], ["Location", false],
];

export default function App() {
  return (
    <Screen>
      <GlobalStyle />
      <TopBar>
        <TopLeft>
          <span>Activities</span>
          <AppMenu>
            <svg width="16" height="16" viewBox="0 0 48 48"><rect width="48" height="48" fill="#2a5b9c" /><path d="M0 0h48v4H0z" fill="#dde4ea" /><DiverShape /></svg>
            <AppName>Subsurface</AppName>
            <svg width="10" height="6"><path d="M0 .5h10L5 5.500z" fill="#d0ccc3" /></svg>
          </AppMenu>
        </TopLeft>
        <Clock>Mon 21:58</Clock>
        <Tray>
          <svg width="94" height="27" viewBox="1812 0 94 27">
            <g fill="none" strokeWidth="2">
              <path d="M1814.500 10.500q6.500-4 13 0" stroke="#8b8880" />
              <path d="M1816 13.500q5-3.500 10 0M1818 16.200q3-2 6 0" stroke="#dfdbd2" />
            </g>
            <circle cx="1821" cy="18.500" r="2" fill="#dfdbd2" />
            <path d="M1841 10h2.500l4-3.500v13l-4-3.500h-2.500z" fill="#dfdbd2" />
            <path d="M1849.500 10v6M1852 8.500v8M1855 6.500q2 4 0 9" stroke="#85827a" strokeWidth="1.500" fill="none" />
            <path d="M1852.500 16.500l4 4M1856.500 16.500l-4 4" stroke="#dfdbd2" strokeWidth="1.600" />
            <path d="M1872.500 8.500h9v11.500h-9zM1875 7h4" fill="none" stroke="#99968d" strokeWidth="2.500" />
            <path d="M1879 9.500l-5 5h3l-2 4 5-5h-3z" fill="#e6e2da" />
            <path d="M1895 11h10l-5 5z" fill="#dfdbd2" />
          </svg>
        </Tray>
      </TopBar>
      <Body>
        <Dock>
          <div>
            {dockArt.map((d, i) => (
              <DockItem key={i}>
                <svg width="67" height="64" viewBox="0 0 67 64">
                  {i === 0 && <SharedDefs />}
                  {d.active && <rect x="2" y="1" width="62" height="62" rx="4" fill="#6b565b" />}
                  {d.dot && <circle cx="4.800" cy="32" r="3" fill="#ea5222" />}
                  {d.art}
                </svg>
              </DockItem>
            ))}
          </div>
          <svg width="67" height="64" viewBox="0 0 67 64" fill="#f2f0f0">
            {[21, 33, 45].map((x) => [22, 33, 44].map((y) => <circle key={`${x}${y}`} cx={x} cy={y - 1} r="2.800" />))}
          </svg>
        </Dock>
        <Window>
          <TitleBar>
            <span />
            <WindowTitle>Subsurface: arjo.xml</WindowTitle>
            <svg width="61" height="28" viewBox="0 0 61 28">
              {["#7a7871", "#7a7871", "#ea5a2c"].map((c, i) => <circle key={i} cx={7 + i * 20} cy="14" r="8" fill={c} stroke="#33322d" strokeWidth=".7" />)}
              <path d="M3 14.500h8M23.500 11h7v5.500h-7zM44.300 11l5.500 5.500M49.800 11l-5.500 5.500" fill="none" stroke="#37352f" strokeWidth="1.300" />
            </svg>
          </TitleBar>
          <MenuBar>
            {menus.map(([k, rest, w]) => <MenuEntry key={rest} $w={w}><u>{k}</u>{rest}</MenuEntry>)}
          </MenuBar>
          <UpperPane>
            <EditorFrame>
              <MessageBar>
                <MessageText>This dive is being edited.</MessageText>
                <PushButton $w={105}>Apply changes</PushButton>
                <PushButton $w={116}>Discard changes</PushButton>
              </MessageBar>
              <Tabs>
                <Tab $w={60} $active>Notes</Tab>
                {tabs.map(([t, w]) => <Tab key={t} $w={w}>{t}</Tab>)}
              </Tabs>
              <TabPane>
                <Form>
                  <Row>
                    <Field $w={138} $lh={17}>
                      <span>Date</span>
                      <DateBox><DateValue>Mon 10 Sep 2018</DateValue><DropZone $w={20}><Arrow /></DropZone></DateBox>
                    </Field>
                    <Field $w={93} $lh={17}>
                      <span>Time</span>
                      <DateBox><DateValue>10:58 PM</DateValue><DropZone $w={15}><Arrow $up /><Arrow /></DropZone></DateBox>
                    </Field>
                    <Field $w={125} $lh={17}><span>Air temp. [°C]</span><Box /></Field>
                    <Field $w={125} $lh={17}><span>Water temp. [°C]</span><Box /></Field>
                  </Row>
                  <Row $indent={252}>
                    <Field $w={125} $lh={17}><span>Depth</span><Box $yellow>15.0m</Box></Field>
                    <Field $w={125} $lh={17}><span>Duration</span><Box $yellow>0:45:33</Box></Field>
                  </Row>
                  <Row $top={7}>
                    <Field $w={479}><span>Location</span><Box /></Field>
                    <GlobeButton>
                      <svg width="22" height="21" viewBox="0 0 22 21"><circle cx="11" cy="12" r="5" fill="#b2b2b0" /><path d="M8 8l4 2 1 4-3 3c-4-2-4-6-2-9z" fill="#8f8f8d" /><circle cx="14" cy="5.500" r="2.200" fill="#999" stroke="#666" strokeWidth=".8" /><path d="M13 7l-1 5 3-4z" fill="#888" /></svg>
                    </GlobeButton>
                  </Row>
                  <Row $top={7} $gap={5}>
                    <Field $w={250}><span>Divemaster</span><Box $h={25} $square /></Field>
                    <Field $w={250}><span>Buddy</span><Box $h={25} $square /></Field>
                  </Row>
                  <Row $top={7} $gap={0}>
                    <Field $w={93}><span>Rating</span><Row $indent={1} $top={3}><Stars /></Row></Field>
                    <Field $w={93}><span>Visibility</span><Row $indent={1} $top={3}><Stars /></Row></Field>
                    <Field $w={319}><span>Suit</span><Box /></Field>
                  </Row>
                  <Row $top={7} $gap={5} $indent={0}>
                    <Field $w={406}><span>Tags</span><Box $h={25} $square /></Field>
                    <Field $w={104}><span>Dive mode</span><SelectBox>Open circuit<Arrow /></SelectBox></Field>
                  </Row>
                  <Row $top={7} $indent={0}>
                    <Field $w={515}><span>Notes</span><Box $h={296} $square /></Field>
                  </Row>
                </Form>
              </TabPane>
            </EditorFrame>
            <ToolStrip>
              {tools.map((t, i) => <Tool key={i} $on={t.on}>{t.art}</Tool>)}
            </ToolStrip>
            <ProfileFrame>
              <Profile />
              <InfoBox>
                <span>Information</span>
                <Gauge />
              </InfoBox>
            </ProfileFrame>
            <Grip $vertical $x={557} $y={343} />
            <Grip $x={920} $y={702} />
            <Grip $vertical $x={1296} $y={848} />
          </UpperPane>
          <LowerPane>
            <DiveList>
              <ListHeader>
                {columns.map(([c, right]) => <HeaderCell key={c} $right={right} $last={c === "Location"}>{c}</HeaderCell>)}
              </ListHeader>
            </DiveList>
            <MapFrame>
              <SatelliteMap />
              <MapControl $x={10} $y={10} $w={40} $h={40}><MapThumb /></MapControl>
              <MapControl $x={20} $y={60} $w={20} $h={20}><ZoomButton plus /></MapControl>
              <MapControl $x={20} $y={90} $w={20} $h={20}><ZoomButton /></MapControl>
              <MapControl $x={513} $y={10} $w={32} $h={32}>
                <svg width="32" height="32" viewBox="0 0 32 32">
                  <rect width="32" height="32" fill="#fff" />
                  <rect x="1.500" y="1.500" width="29" height="29" fill="#dedede" stroke="#000" />
                  <path d="M8 11h16M8 16h16M8 21h16" stroke="#000" strokeWidth="2" />
                </svg>
              </MapControl>
            </MapFrame>
          </LowerPane>
        </Window>
      </Body>
    </Screen>
  );
}
